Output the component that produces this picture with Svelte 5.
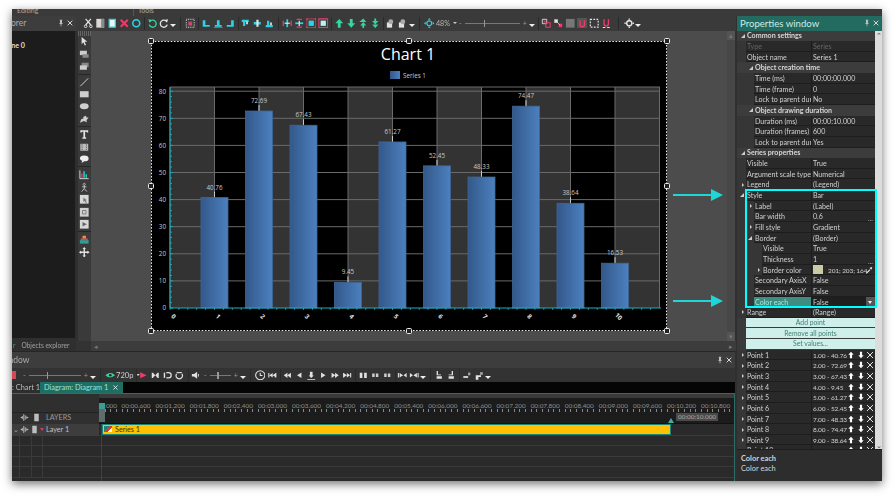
<script>
    const W = '#e2e2e2', C = '#2ad4e6', R = '#ee3a6a', G = '#35d6a0', B = '#9a9a9a';

    // small toolbar glyphs, all on a 12x12 box
    const icons = {
        cut: [{ d: 'M3 1l6 7M9 1L3 8', s: W, w: 1.4 }, { d: 'M1.5 9.5a1.5 1.5 0 1 0 3 0a1.5 1.5 0 1 0-3 0M7.5 9.5a1.5 1.5 0 1 0 3 0a1.5 1.5 0 1 0-3 0', s: W, w: 1.1 }],
        page: [{ d: 'M1.5 1h9v10h-9z', f: '#d8d8d8' }, { d: 'M7 1h3.5v10H7z', f: '#8a8a8a' }],
        bluepage: [{ d: 'M2.5 1.5h7v9h-7z', f: '#e8f8fa', s: C, w: 1.4 }],
        del: [{ d: 'M2 2l8 8M10 2l-8 8', s: R, w: 2.4 }],
        ring: [{ d: 'M2 6a4 4 0 1 0 8 0a4 4 0 1 0-8 0', s: C, w: 1.8 }],
        undo: [{ d: 'M3.2 4.2a4 4 0 1 1-.6 3.4', s: G, w: 1.5 }, { d: 'M1.5 1.5l4.2.8-2.8 3z', f: G }],
        redo: [{ d: 'M8.8 4.2a4 4 0 1 0 .6 3.4', s: W, w: 1.5 }, { d: 'M10.5 1.5l-4.2.8 2.8 3z', f: W }],
        grid: [{ d: 'M1.5 1.5h9v9h-9z', s: W, w: 1.2, dash: '1 1' }, { d: 'M3.5 3.5h5v5h-5z', f: '#555' }, { d: 'M4 5h4v3.5H4z', f: R }],
        al1: [{ d: 'M2 2.5h3v6H2zM2 8h8v2H2z', f: C }],
        al2: [{ d: 'M4.5 2.5h3v6h-3zM2 8h8v2H2z', f: C }, { d: 'M1 11h10', s: '#888', w: 1 }],
        al3: [{ d: 'M7 2.5h3v6H7zM2 8h8v2H2z', f: C }],
        at1: [{ d: 'M2 2h8v2.5H2zM3.5 4h2.5v5H3.5z', f: C }, { d: 'M7 4h2v3H7z', f: W }],
        at2: [{ d: 'M2 4.5h8v3H2z', f: C }, { d: 'M5 2h2.5v8H5z', f: W }],
        at3: [{ d: 'M2 8h8v2.5H2zM3.5 3h2.5v5H3.5z', f: C }, { d: 'M7 5h2v3H7z', f: W }],
        fit1: [{ d: 'M5 1.5h2v9H5z', f: C }, { d: 'M1.5 3v6M10.5 3v6', s: R, w: 1.5 }, { d: 'M3 6h6', s: W, w: 1.4 }],
        fit2: [{ d: 'M1.5 5h9v2h-9z', f: C }, { d: 'M3 1.5h6M3 10.5h6', s: R, w: 1.5 }, { d: 'M6 3v6', s: W, w: 1.4 }],
        fit3: [{ d: 'M3 3h6v6H3z', f: C }, { d: 'M1 2V1h1M10 1h1v1M1 10v1h1M10 11h1v-1', s: R, w: 1.4 }, { d: 'M1 1h10v10H1z', s: R, w: .8 }],
        fit4: [{ d: 'M3 3h6v6H3z', f: '#b8f2f6' }, { d: 'M1 1h10v10H1z', s: R, w: 1.2 }],
        up: [{ d: 'M6 1l4.5 5H7.6v5H4.4V6H1.5z', f: G }],
        down: [{ d: 'M6 11L1.5 6h2.9V1h3.2v5h2.9z', f: G }],
        up2: [{ d: 'M6 .5l3.5 4H1.5zM6 4.5l3.5 4H7v3H5v-3H2.5z', f: G }],
        down2: [{ d: 'M6 11.5l-3.5-4h7zM6 7.5l-3.5-4H5v-3h2v3h2.5z', f: G }],
        front: [{ d: 'M1 5h6v6H1z', f: W }, { d: 'M5.5 1.5a2.8 2.8 0 1 1 0 5.6a2.8 2.8 0 1 1 0-5.6z', f: '#aaa' }],
        target: [{ d: 'M6 3.2a2.8 2.8 0 1 0 .01 0', s: C, w: 1.5 }, { d: 'M6 0l1.6 2H4.4zM6 12l-1.6-2h3.2zM0 6l2-1.6v3.2zM12 6l-2 1.6V4.4z', f: C }],
        snap1: [{ d: 'M1.5 1.5h5v5h-5z', s: W, w: 1 }, { d: 'M5.5 5.5h5v5h-5z', s: R, w: 1.2 }, { d: 'M3 3h2v2H3z', f: R }],
        snap2: [{ d: 'M1.5 1.5h4v4h-4z', f: W }, { d: 'M6.5 6.5h4v4h-4z', f: R }, { d: 'M4 4l4 4', s: W, w: .8 }],
        square: [{ d: 'M1 1h10v10H1z', f: '#777' }],
        u1: [{ d: 'M0 0h12v12H0z', f: '#555' }, { d: 'M3.5 2.5v5a2.5 2.5 0 0 0 5 0v-5', s: R, w: 1.5 }],
        dots: [{ d: 'M1.5 1.5h9v9h-9z', s: W, w: 1.4, dash: '2 1.5' }],
        u2: [{ d: 'M3.5 1.5v5a2.5 2.5 0 0 0 5 0v-5', s: R, w: 1.6 }, { d: 'M2 11h3M7 11h3', s: W, w: 1.2 }],
        gear: [{ d: 'M6 3a3 3 0 1 0 .01 0', s: W, w: 1.8 }, { d: 'M5.2 .5h1.6V2H5.2zM5.2 10h1.6v1.5H5.2zM.5 5.2H2v1.6H.5zM10 5.2h1.5v1.6H10z', f: W }],
        arrow: [{ d: 'M3 1l6.5 5.6H6.4l1.6 3.6-1.5.7L5 7.2 3 9.4z', f: W }],
        box1: [{ d: 'M1 2h8v5H1z', f: '#ccc' }, { d: 'M4 6h7v4H4z', f: '#888' }],
        box2: [{ d: 'M3 2h8v5H3z', f: '#888' }, { d: 'M1 5h8v5H1z', f: '#ccc' }],
        line: [{ d: 'M1.5 10.5l9-9', s: W, w: 1 }],
        rect: [{ d: 'M1 2.5h10v7H1z', f: '#cfcfcf' }],
        oval: [{ d: 'M1 6a5 3.4 0 1 0 10 0a5 3.4 0 1 0-10 0', f: '#cfcfcf' }],
        star: [{ d: 'M1 10l1.5-4L5 5V3l3-1 .5 2H11L8.5 7 9 9.5 5.5 8z', f: '#cfcfcf' }],
        film: [{ d: 'M1.5 2h9v8h-9z', f: '#bbb' }, { d: 'M3.5 2v8M8.5 2v8', s: '#444', w: 1, dash: '1 1' }],
        bubble: [{ d: 'M1 5a5 3.4 0 1 1 5 3.4l-3 2 .6-2.6A3.4 3.4 0 0 1 1 5z', f: '#eee' }],
        chart: [{ d: 'M1 1.5v9.5h10', s: W, w: 1 }, { d: 'M2.5 10V5h1.6v5z', f: R }, { d: 'M5 10V2.5h1.6V10z', f: C }, { d: 'M7.5 10V6h1.6v4z', f: G }],
        person: [{ d: 'M6 1.5a1.2 1.2 0 1 0 .01 0M6 4v3.5L3 11M6 7.5L9 11M3.5 5.5h5', s: '#ccc', w: 1 }],
        sq1: [{ d: 'M1 1h10v10H1z', f: '#d8d8d8' }, { d: 'M5 4l4 3-1.5.5L9 10l-1 .5L6.5 8 5 9z', f: '#777' }],
        sq2: [{ d: 'M1 1h10v10H1z', f: '#d0d0d0' }, { d: 'M4 4h4v4H4z', s: '#777', w: 1 }],
        sq3: [{ d: 'M1 1h10v10H1z', f: '#d8d8d8' }, { d: 'M4 3.5l5 2.5-5 2.5z', f: '#666' }],
        bars: [{ d: 'M1 7h10v4H1z', f: '#2f9f96' }, { d: 'M2 5h8v2H2z', f: R }, { d: 'M4 2h4v3H4z', f: '#e09a30' }],
        move: [{ d: 'M6 0l2 2.4H6.8v2.8h2.8V4L12 6 9.6 8V6.8H6.8v2.8H8L6 12 4 9.6h1.2V6.8H2.4V8L0 6l2.4-2v1.2h2.8V2.4H4z', f: W }],
        text: [{ d: 'M1.5 1.5h9v2.4H9L8.6 3H7v6.5l1.2.3V11H3.8V9.8L5 9.5V3H3.4L3 3.9H1.5z', f: W }],
        eye: [{ d: 'M.5 6Q6 1 11.5 6Q6 11 .5 6z', f: G }, { d: 'M4.5 6a1.5 1.5 0 1 0 3 0a1.5 1.5 0 1 0-3 0', f: '#222' }],
        play: [{ d: 'M2.5 2.5L10 6l-7.5 3.5z', f: R }],
        cutin: [{ d: 'M2 3h1.6v6H2zM8.4 3H10v6H8.4zM3.6 3.5L6 6 3.6 8.5zM8.4 3.5L6 6l2.4 2.5z', f: W }],
        mark: [{ d: 'M2 3h1.6v6H2z', f: W }, { d: 'M5 3h2.5a3 3 0 0 1 0 6H5', s: W, w: 1.4 }],
        loop: [{ d: 'M3 4.5a3.6 3.6 0 1 0 6 0', s: W, w: 1.3 }, { d: 'M3 3h6', s: W, w: 1.3 }],
        speaker: [{ d: 'M1 4.5h2.5L7 2v8L3.5 7.5H1z', f: W }, { d: 'M8.5 4.5v3', s: W, w: 1 }],
        clock: [{ d: 'M6 .8a5.2 5.2 0 1 0 .01 0M6 3v3.2h2.6', s: W, w: 1.2 }],
        first: [{ d: 'M1.5 3.5h1.2v5H1.5zM2.7 6L6.5 3.5v5zM6.5 6l3.8-2.5v5z', f: W }, { d: 'M9.5 3.5h1.2v5H9.5z', f: W }],
        prev: [{ d: 'M2 6l4.2-3v6zM6 6l4.2-3v6z', f: W }],
        back: [{ d: 'M3.5 6l5-3.2v6.4z', f: W }],
        stop: [{ d: 'M4.5 2h3v4.4h1.4L6 9 3.1 6.4h1.4zM1.5 10.2h9v1h-9z', f: W }],
        fwd: [{ d: 'M8.5 6l-5-3.2v6.4z', f: W }],
        next: [{ d: 'M10 6L5.8 3v6zM6 6L1.8 3v6z', f: W }],
        last: [{ d: 'M10.5 3.5H9.3v5h1.2zM9.3 6L5.5 3.5v5zM5.5 6L1.7 3.5v5z', f: W }, { d: 'M1.3 3.5h1.2v5H1.3z', f: W }],
        pause: [{ d: 'M2 3h3v6H2zM7 3h3v6H7z', f: W }],
        pause2: [{ d: 'M2.5 4h2.8v4H2.5zM6.7 4h2.8v4H6.7z', f: '#cfcfcf' }],
        tr1: [{ d: 'M1 3.5h1.2v5H1zM3 3.5L7 6 3 8.5zM7.5 6l3.5-2.5v5z', f: W }],
        tr2: [{ d: 'M11 3.5H9.8v5H11zM9 3.5L5 6l4 2.5zM4.5 6L1 3.5v5z', f: W }],
        lay1: [{ d: 'M3 1h1.5v4H8v1H3zM3 7h6v3H3z', f: W }],
        lay2: [{ d: 'M8 1H6.5v4H3v1h5zM3 7h6v3H3z', f: W }],
        key1: [{ d: 'M1.5 7h5.5v2H1.5z', f: W }, { d: 'M7 3h2.5v3H7z', f: '#aaa' }],
        key2: [{ d: 'M2 6h6v2H5v3H2z', f: W }, { d: 'M7 2.5h3v3H7z', f: '#aaa' }],
        wave: [{ d: 'M1 6h2M3 4v4M5 1.5v9M7 3v6M9 4.5v3M11 6h-2', s: '#cfcfcf', w: 1.1 }],
        barV: [{ d: 'M3 1h6v10H3z', f: '#bdbdbd' }],
        pin: [{ d: 'M4 1h4v1l-.5.3V6L9 7.5H6.6V11h-1.2V7.5H3L4.5 6V2.3L4 2z', f: '#bdbdbd' }],
        close: [{ d: 'M2.5 2.5l7 7M9.5 2.5l-7 7', s: '#d6d6d6', w: 1.5 }],
        ptUp: [{ d: 'M6 1l4 4.8H7.6V11H4.4V5.8H2z', f: '#fff' }],
        ptDown: [{ d: 'M6 11L2 6.2h2.4V1h3.2v5.2H10z', f: '#fff' }],
        ptDel: [{ d: 'M1.5 1.5l9 9M10.5 1.5l-9 9', s: '#fff', w: 1.3 }],
        pipette: [{ d: 'M1.5 10.5L7 5l1 1-5.5 5.5zM7 3l1-1 .8.8L10 1.6l1 1L9.8 3.8l.6.6-1 1z', f: '#fff' }]
    };

    const s = (n) => ({ sep: n });
    const topTools = [
        'cut', 'page', 'bluepage', 'del', 'ring', s(4), 'undo', 'redo', 'drop', s(8), 'grid', s(4), 'al1', 'al2', 'al3', s(3), 'at1', 'at2', 'at3', s(6),
        'fit1', 'fit2', 'fit3', 'fit4', s(4), 'up', 'down', 'up2', 'down2', s(4), 'front', 'front', 'drop', s(8), 'target',
        { label: '48%', width: 22, tri: true }, { slider: 72 }, 'drop', s(5), 'snap1', 'snap2', 'square', 'u1', 'dots', 'u2', s(11), 'gear', 'drop'
    ];
    const leftTools = ['arrow', 'box1', 'box2', s(3), 'line', 'rect', 'oval', 'star', s(3), 'text', 'film', 'bubble', s(3), 'chart', 'person', 'sq1', 'sq2', 'sq3', s(3), 'bars', 'move'];
    const timeTools = [
        { slider: 69 }, 'drop', s(8), 'eye', { label: '720p', width: 18, tri: true, start: true }, s(3), 'play', 'cutin', 'mark', 'loop', s(5), 'speaker', { slider: 38 }, 'drop', s(8), 'clock',
        'first', s(3), 'prev', 'back', 'stop', 'fwd', 'next', 'last', s(4), 'pause', 'pause2', 'pause2', s(3), 'tr1', 'tr2', 'drop', s(7), 'lay1', 'lay2', s(4), 'key1', 'key2', 'drop'
    ];

    const props = [
        { kind: 'group', name: 'Common settings', open: true },
        { name: 'Type', value: 'Series', dim: true },
        { name: 'Object name', value: 'Series 1' },
        { kind: 'group', name: 'Object creation time', level: 1, open: true },
        { name: 'Time (ms)', value: '00:00:00.000', level: 1 },
        { name: 'Time (frame)', value: '0', level: 1 },
        { name: 'Lock to parent dur', value: 'No', level: 1 },
        { kind: 'group', name: 'Object drawing duration', level: 1, open: true },
        { name: 'Duration (ms)', value: '00:00:10.000', level: 1 },
        { name: 'Duration (frames)', value: '600', level: 1 },
        { name: 'Lock to parent dur', value: 'Yes', level: 1 },
        { kind: 'group', name: 'Series properties', open: true },
        { name: 'Visible', value: 'True' },
        { name: 'Argument scale type', value: 'Numerical' },
        { name: 'Legend', value: '(Legend)', closed: true },
        { name: 'Style', value: 'Bar', opened: true },
        { name: 'Label', value: '(Label)', level: 1, closed: true },
        { name: 'Bar width', value: '0.6', level: 1, more: true },
        { name: 'Fill style', value: 'Gradient', level: 1, closed: true },
        { name: 'Border', value: '(Border)', level: 1, opened: true },
        { name: 'Visible', value: 'True', level: 2 },
        { name: 'Thickness', value: '1', level: 2, more: true },
        { name: 'Border color', value: '201; 203; 164', level: 2, closed: true, swatch: true },
        { name: 'Secondary AxisX', value: 'False', level: 1 },
        { name: 'Secondary AxisY', value: 'False', level: 1 },
        { name: 'Color each', value: 'False', level: 1, selected: true },
        { name: 'Range', value: '(Range)', closed: true }
    ];
    const buttons = ['Add point', 'Remove all points', 'Set values...'];
    const values = [40.76, 72.69, 67.43, 9.45, 61.27, 52.45, 48.33, 74.47, 38.64, 16.53];
    const pointText = ['1.00 - 40.76', '2.00 - 72.69', '3.00 - 67.43', '4.00 - 9.45', '5.00 - 61.27', '6.00 - 52.45', '7.00 - 48.33', '8.00 - 74.47', '9.00 - 38.64', '10.00 - 16.53'];

    const stepX = 44.5, left = 170, base = 308, unit = 2.71;
    const cols = Array.from({ length: 12 }, (_, i) => i);
    const bands = [0, 2, 4, 6, 8, 10];
    const handles = [[151, 41], [409, 41], [667, 41], [151, 186], [667, 186], [151, 331], [409, 331], [667, 331]];
    const yTicks = Array.from({ length: 41 }, (_, i) => i * 2);
    const xTicks = Array.from({ length: 55 }, (_, i) => i);

    const rulerLabels = [];
    for (let i = 1; i <= 18; i++) {
        const t = i * 0.6;
        const sec = Math.floor(t + 0.001);
        const ms = Math.round((t - sec) * 1000);
        rulerLabels.push(`00:${String(sec).padStart(2, '0')}.${String(ms).padStart(3, '0')}`);
    }
    const emptyRows = [0, 1, 2, 3];
</script>

{#snippet glyph(name)}
    <svg class="glyph" viewBox="0 0 12 12" aria-hidden="true">
        {#each icons[name] as p}
            <path d={p.d} fill={p.f ?? 'none'} stroke={p.s ?? 'none'} stroke-width={p.w ?? 0} stroke-dasharray={p.dash} />
        {/each}
    </svg>
{/snippet}

{#snippet strip(items)}
    {#each items as item}
        {#if item === 'drop'}
            <span class="drop"></span>
        {:else if typeof item === 'string'}
            <span class="tool">{@render glyph(item)}</span>
        {:else if item.sep}
            <span class="sep" style="width: {item.sep}px"></span>
        {:else if item.label}
            <span class="tool-label" class:start={item.start} style="width: {item.width}px">{item.label}{#if item.tri}<i class="mini"></i>{/if}</span>
        {:else if item.slider}
            <span class="slider" style="width: {item.slider}px"><b>-</b><span class="track"><i></i></span><b>+</b></span>
        {/if}
    {/each}
{/snippet}

<div class="page">
    <div class="win">
        <div class="menu-cut">
            <span class="m1">Editing</span>
            <span class="m2">Tools</span>
        </div>

        <div class="columns">
            <div class="left-side">
                <div class="upper">
                    <aside class="explorer">
                        <div class="dock-head">
                            <span class="dock-title cut-ex">Explorer</span>
                            <span class="dock-icons">{@render glyph('pin')}{@render glyph('close')}</span>
                        </div>
                        <div class="explorer-body"><span class="scene">Scene 0</span></div>
                        <div class="explorer-tabs"><span class="tab-on">r</span><span>Objects explorer</span></div>
                    </aside>

                    <section class="work">
                        <div class="toolbar top">{@render strip(topTools)}</div>
                        <div class="work-mid">
                            <div class="toolcol">
                                <span class="grip"></span>
                                {#each leftTools as item}
                                    {#if item.sep}
                                        <span class="hsep"></span>
                                    {:else}
                                        <span class="vtool">{@render glyph(item)}</span>
                                    {/if}
                                {/each}
                            </div>
                            <div class="stage">
                                <svg class="chart" viewBox="151 41 516 290" width="516" height="290">
                                    <rect x="151" y="41" width="516" height="290" fill="#000" />
                                    <text x="408" y="60" class="title">Chart 1</text>
                                    <defs>
                                        <linearGradient id="barFill">
                                            <stop offset="0" stop-color="#33588a" />
                                            <stop offset="1" stop-color="#4c80bf" />
                                        </linearGradient>
                                    </defs>
                                    <rect x="390" y="71" width="10" height="8" fill="url(#barFill)" />
                                    <text x="403" y="78" class="tiny">Series 1</text>

                                    {#each bands as b}
                                        <rect x={left + b * stepX} y="87" width={stepX} height="221" fill="#333" />
                                    {/each}
                                    {#each cols as i}
                                        {#if left + i * stepX < 665}
                                            <line x1={left + i * stepX} x2={left + i * stepX} y1="87" y2="308" class="grid-line" />
                                        {/if}
                                    {/each}
                                    <line x1="170" x2="660" y1="87" y2="87" class="grid-line" />
                                    {#each [10, 20, 30, 40, 50, 60, 70, 80] as v}
                                        <line x1="170" x2="660" y1={base - v * unit} y2={base - v * unit} class="grid-line" />
                                    {/each}

                                    {#each values as v, i}
                                        {@const x = left + (i + 1) * stepX}
                                        {@const top = base - v * unit}
                                        <line x1={x} x2={x} y1={top - 6} y2={top} stroke="#c8c8c8" stroke-width="1" />
                                        <rect x={x - 13.5} y={top} width="27" height={v * unit} fill="url(#barFill)" stroke="#3f6797" stroke-width=".8" />
                                        <text x={x} y={top - 8} class="tiny mid">{v}</text>
                                    {/each}

                                    <line x1="170" x2="170" y1="87" y2="308" class="axis" />
                                    <line x1="170" x2="661" y1="308" y2="308" class="axis" />
                                    {#each yTicks as t}
                                        <line x1="170" x2={t % 10 === 0 ? 173 : 172} y1={base - t * unit} y2={base - t * unit} class="tick" />
                                    {/each}
                                    {#each xTicks as t}
                                        <line x1={left + t * 8.9} x2={left + t * 8.9} y1="308" y2="310" class="tick" />
                                    {/each}
                                    {#each [0, 10, 20, 30, 40, 50, 60, 70, 80] as v}
                                        <text x="166" y={base - v * unit + 2.4} class="tiny end">{v}</text>
                                    {/each}
                                    {#each Array.from({ length: 11 }, (_, i) => i) as i}
                                        <text x="0" y="0" class="tiny mid strong" transform="translate({left + i * stepX + 2} 318) rotate(45)">{i}</text>
                                    {/each}

                                    <rect x="151.5" y="41.5" width="515" height="289" class="sel" />
                                    {#each handles as [hx, hy]}
                                        <rect x={hx - 2.5} y={hy - 2.5} width="5" height="5" rx="1" fill="#222" stroke="#eee" stroke-width="1" />
                                    {/each}
                                </svg>
                            </div>
                            <div class="vscroll"><span class="scroll-btn">▴</span><span class="scroll-fill"></span><span class="scroll-btn">▾</span></div>
                        </div>
                        <div class="hscroll"><span class="corner"></span><span class="arrow-l">◂</span><span class="scroll-fill"></span><span class="arrow-r">▸</span></div>
                    </section>
                </div>

                <section class="timeline">
                    <div class="dock-head wide">
                        <span class="dock-title cut-tl">Timeline window</span>
                        <span class="dock-icons">{@render glyph('pin')}{@render glyph('close')}</span>
                    </div>
                    <div class="toolbar lower"><span class="stub"></span>{@render strip(timeTools)}</div>
                    <div class="tabs">
                        <span class="tab cut-tab">Scene 0: Chart 1</span>
                        <span class="tab active">Diagram: Diagram 1 <svg class="tab-x" viewBox="0 0 12 12"><path d="M2.5 2.5l7 7M9.5 2.5l-7 7" stroke="#e8e8e8" stroke-width="1.5" /></svg></span>
                    </div>
                    <div class="tracks">
                        <div class="row ruler">
                            <div class="head"></div>
                            <div class="scale">
                                <span class="zero">:000</span>
                                {#each rulerLabels as label}
                                    <span class="stamp">{label}</span>
                                {/each}
                            </div>
                        </div>
                        <div class="row layers">
                            <div class="head">
                                <span class="h-ic">{@render glyph('wave')}</span>
                                <span class="h-ic">{@render glyph('barV')}</span>
                                <span class="h-name">LAYERS</span>
                            </div>
                            <div class="under-scale"><span class="end-tip">00:00:10.000</span></div>
                        </div>
                        <div class="row layer">
                            <div class="head on">
                                <span class="chev">⌄</span>
                                <span class="h-ic">{@render glyph('wave')}</span>
                                <span class="h-ic">{@render glyph('barV')}</span>
                                <i class="red-tri"></i>
                                <span class="h-name">Layer 1</span>
                            </div>
                            <div class="lane"><div class="clip"><i class="clip-mark"></i>Series 1</div></div>
                        </div>
                        {#each emptyRows as r}
                            <div class="row plain" data-row={r}>
                                <div class="head cells"><i></i><i></i><i></i></div>
                                <div class="lane"></div>
                            </div>
                        {/each}
                        <span class="cursor-top"></span>
                        <span class="cursor-line"></span>
                        <span class="end-mark"></span>
                    </div>
                </section>
            </div>

            <aside class="props">
                <div class="props-head">
                    <span>Properties window</span>
                    <span class="dock-icons">{@render glyph('pin')}{@render glyph('close')}</span>
                </div>
                <div class="props-mid">
                    <div class="props-list">
                        {#each props as p}
                            {#if p.kind === 'group'}
                                <div class="prop group" style="padding-left: {(p.level ?? 0) * 8 + 4}px"><i class="tri-open"></i>{p.name}</div>
                            {:else}
                                <div class="prop" class:selected={p.selected} class:dim={p.dim} style="--lv: {(p.level ?? 0) * 8}px">
                                    <span class="gut">
                                        {#if p.closed}<i class="tri-closed"></i>{/if}
                                        {#if p.opened}<i class="tri-open"></i>{/if}
                                    </span>
                                    <span class="pname">{p.name}</span>
                                    <span class="pval">
                                        {#if p.swatch}<i class="swatch"></i>{/if}
                                        <span class:small={p.swatch}>{p.value}</span>
                                        {#if p.more}<i class="more">...</i>{/if}
                                        {#if p.swatch}<span class="pipette">{@render glyph('pipette')}</span>{/if}
                                        {#if p.selected}<i class="combo"></i>{/if}
                                    </span>
                                </div>
                            {/if}
                        {/each}
                        {#each buttons as b}
                            <button class="pbtn">{b}</button>
                        {/each}
                        {#each pointText as t, i}
                            <div class="prop point">
                                <span class="gut"><i class="tri-closed"></i></span>
                                <span class="pname">Point {i + 1}</span>
                                <span class="pval"><span class="small">{t}</span>
                                    <span class="pt-icons">{@render glyph('ptUp')}{@render glyph('ptDown')}{@render glyph('ptDel')}</span>
                                </span>
                            </div>
                        {/each}
                    </div>
                    <div class="props-scroll"><span>⌃</span><span>⌄</span></div>
                    <div class="highlight"></div>
                </div>
                <div class="props-desc">
                    <strong>Color each</strong>
                    <span>Color each</span>
                </div>
            </aside>
        </div>

        <svg class="pointer a1" viewBox="0 0 50 12" width="50" height="12"><path d="M0 5h38V0l12 6-12 6V7H0z" fill="#1fd6d6" /></svg>
        <svg class="pointer a2" viewBox="0 0 50 12" width="50" height="12"><path d="M0 5h38V0l12 6-12 6V7H0z" fill="#1fd6d6" /></svg>
    </div>
</div>

<style>
    :global(body) { margin: 0; background: #fff; font-family: Lato, "Liberation Sans", sans-serif; color: #d4d4d4; }

    .page { width: 894px; height: 496px; padding: 9px 12px 15px; box-sizing: border-box; overflow: hidden; }
    .win { position: relative; width: 870px; height: 472px; background: #2f2f2f; display: flex; flex-direction: column; box-shadow: 0 3px 9px rgb(0 0 0 / 0.55); filter: blur(0.3px); font-size: 7.2px; }

    .menu-cut { height: 6.5px; background: #3a3a3a; overflow: hidden; display: flex; line-height: 2px; color: #aaa; font-size: 7px; flex: none; }
    .m1 { margin-left: 5px; width: 116px; border-right: 1px solid #555; }
    .m2 { margin-left: 4px; }

    .columns { flex: 1; display: flex; min-height: 0; }
    .left-side { width: 724px; display: flex; flex-direction: column; flex: none; }
    .upper { height: 335.5px; display: flex; flex: none; }

    .explorer { width: 64px; flex: none; display: flex; flex-direction: column; background: #2f2f2f; }
    .dock-head { height: 15px; background: #3d3d3d; display: flex; align-items: center; justify-content: space-between; overflow: hidden; flex: none; }
    .dock-title { font-size: 8.5px; color: #aaa; white-space: nowrap; }
    .cut-ex { margin-left: -17px; }
    .dock-icons { display: flex; align-items: center; gap: 1px; margin-right: 2px; }
    .dock-icons .glyph { width: 8px; height: 8px; }
    .explorer-body { flex: 1; background: #1c1c1c; padding: 10px 0 0 0; overflow: hidden; margin-right: 1px; }
    .scene { margin-left: -12px; white-space: nowrap; display: block; color: #ddd; font-weight: 700; }
    .explorer-tabs { height: 13px; display: flex; align-items: center; gap: 6px; flex: none; color: #a0a0a0; font-size: 6.6px; padding-left: 1px; }
    .tab-on { color: #37a093; }

    .work { flex: 1; display: flex; flex-direction: column; min-width: 0; }
    .toolbar { display: flex; align-items: center; flex: none; }
    .top { height: 15px; background: #3a3a3a; padding-left: 6px; }
    .tool { width: 12px; height: 12px; display: flex; align-items: center; justify-content: center; flex: none; }
    .glyph { width: 10.5px; height: 10.5px; display: block; flex: none; }
    .drop { width: 6px; height: 8px; position: relative; flex: none; }
    .drop::after { content: ''; position: absolute; left: 0; bottom: 0; border: 3px solid transparent; border-top: 3px solid #eee; border-bottom: 0; }
    .sep { height: 13px; position: relative; flex: none; }
    .sep::after { content: ''; position: absolute; left: 50%; top: 0; bottom: 0; width: 1px; background: #2a2a2a; }
    .tool-label { display: flex; align-items: center; justify-content: flex-end; gap: 2px; color: #b5b5b5; flex: none; }
    .tool-label.start { justify-content: flex-start; color: #cfcfcf; font-size: 7.6px; }
    .mini { border: 2px solid transparent; border-top: 2.5px solid #ccc; border-bottom: 0; margin-left: 1px; }
    .slider { display: flex; align-items: center; gap: 3px; padding: 0 2px; box-sizing: border-box; color: #999; flex: none; }
    .slider b { font-weight: 400; }
    .track { flex: 1; height: 1px; background: #777; position: relative; }
    .track i { position: absolute; left: 35%; top: -3px; width: 1.5px; height: 7px; background: #999; }

    .work-mid { flex: 1; display: flex; min-height: 0; }
    .toolcol { width: 13px; margin-left: 2px; background: #3a3a3a; display: flex; flex-direction: column; align-items: center; flex: none; }
    .grip { height: 5px; width: 100%; background: repeating-linear-gradient(90deg, #666 0 1px, #3a3a3a 1px 2px); flex: none; }
    .vtool { width: 12px; height: 12.4px; display: flex; align-items: center; justify-content: center; flex: none; }
    .hsep { height: 3px; width: 100%; flex: none; position: relative; }
    .hsep::after { content: ''; position: absolute; left: 0; right: 0; top: 1px; height: 1px; background: #262626; }

    .stage { flex: 1; background: #4c4c4c; padding: 10px 0 0 60px; box-sizing: border-box; overflow: hidden; }
    .chart { display: block; overflow: visible; font-family: "Open Sans", Lato, sans-serif; }
    .title { font-size: 16px; fill: #fff; text-anchor: middle; }
    .tiny { font-size: 6.3px; fill: #c9c9c9; }
    .strong { fill: #e4e4e4; font-weight: 700; }
    .mid { text-anchor: middle; }
    .end { text-anchor: end; }
    .grid-line { stroke: #6a6a6a; stroke-width: 1; }
    .axis { stroke: #18b4bf; stroke-width: 1; }
    .tick { stroke: #18b4bf; stroke-width: .8; }
    .sel { fill: none; stroke: #ececec; stroke-width: 1; stroke-dasharray: 1.6 1.6; }

    .vscroll { width: 8px; background: #474747; display: flex; flex-direction: column; color: #777; flex: none; margin-right: 1px; }
    .scroll-btn { height: 9px; background: #545454; font-size: 7px; line-height: 9px; text-align: center; flex: none; }
    .scroll-fill { flex: 1; }
    .hscroll { height: 10px; display: flex; align-items: center; background: #3c3c3c; color: #777; flex: none; font-size: 7px; }
    .corner { width: 15px; flex: none; background: #333; height: 100%; }
    .arrow-l { padding-left: 3px; }
    .arrow-r { padding-right: 3px; }

    .timeline { flex: 1; display: flex; flex-direction: column; min-height: 0; margin-right: 1px; }
    .wide { height: 17px; border-top: 1.5px solid #262626; box-sizing: border-box; }
    .cut-tl { margin-left: -46px; }
    .lower { height: 14px; background: #333; }
    .stub { width: 9px; height: 8px; flex: none; background: linear-gradient(90deg, #d04a5a 0 4px, transparent 4px); }
    .tabs { height: 12px; background: #050505; display: flex; flex: none; border-bottom: 1px solid #2d6f66; box-sizing: border-box; align-items: stretch; overflow: hidden; }
    .tab { display: flex; align-items: center; gap: 4px; padding: 0 4px; white-space: nowrap; color: #bbb; font-size: 7.4px; }
    .cut-tab { margin-left: -32px; justify-content: flex-end; flex: none; background: #2e2e2e; padding-left: 36px; box-sizing: content-box; padding-right: 0; width: 24px; overflow: hidden; }
    .active { background: #1f6e63; color: #9fe0d6; }
    .tab-x { width: 7px; height: 7px; }

    .tracks { flex: 1; position: relative; display: flex; flex-direction: column; overflow: hidden; border-right: 1px solid #2d6f66; background: #2a2a2a; min-height: 0; }
    .row { display: flex; flex: none; }
    .head { width: 87px; flex: none; display: flex; align-items: center; background: #2f2f2f; box-sizing: border-box; }
    .ruler { height: 18px; }
    .scale { flex: 1; display: flex; align-items: flex-end; overflow: hidden; background: linear-gradient(#3a3a3a 0 4px, #1c1c1c 4px); position: relative; padding-bottom: 3px; box-sizing: border-box; color: #8f8f8f; font-size: 6.4px; white-space: nowrap; }
    .scale::after { content: ''; position: absolute; left: 0; right: 0; bottom: 0; height: 3px; background: repeating-linear-gradient(90deg, #888 0 1px, transparent 1px 5.68px); }
    .zero { width: 20px; flex: none; text-align: right; padding-right: 2px; box-sizing: border-box; }
    .stamp { width: 34.1px; flex: none; text-align: center; }
    .layers { height: 12px; }
    .layers .head { padding: 0 0 2px 7px; gap: 2px; background: #303030; border-top: 1px solid #222; }
    .h-ic { width: 10px; display: flex; justify-content: center; }
    .h-ic .glyph { width: 9px; height: 9px; }
    .h-name { margin-left: 3px; color: #9a9a9a; font-size: 7.2px; }
    .under-scale { flex: 1; background: #1c1c1c; position: relative; border-bottom: 1px solid #111; }
    .end-tip { position: absolute; left: 577px; top: 1px; background: #4a4a4a; color: #a8a8a8; padding: 0 2px; font-size: 6.4px; line-height: 8px; }
    .layer { height: 11.5px; }
    .on { background: #3d3d3d; padding-left: 1px; gap: 1px; }
    .on .h-ic { width: 9px; }
    .on .h-name { margin-left: 1px; color: #c0c0c0; }
    .red-tri { border: 2px solid transparent; border-top: 3px solid #d83a5a; border-bottom: 0; flex: none; }
    .chev { width: 6px; color: #aaa; line-height: 7px; }
    .lane { flex: 1; border-bottom: 1px solid #3a3a3a; position: relative; }
    .clip { position: absolute; left: 3px; width: 569px; top: 0; bottom: 0; background: #ffc000; border: 1px solid #1d8277; box-sizing: border-box; color: #3d3000; font-size: 7.2px; line-height: 9px; padding-left: 12px; }
    .clip-mark { position: absolute; left: 1px; top: 1px; width: 8px; height: 6px; background: linear-gradient(135deg, #1d8277 0 40%, #d6402e 40% 70%, #fff 70%); }
    .plain { height: 10.6px; }
    .cells { border-bottom: 1px solid #3a3a3a; background: #2a2a2a; position: relative; padding-left: 7px; gap: 10.5px; align-items: stretch; }
    .cells i { width: 1px; background: #3a3a3a; }
    .cursor-top { position: absolute; left: 87px; top: 9px; width: 6px; height: 19px; background: #5c6d6c; }
    .cursor-top::before { content: ''; position: absolute; left: 0; top: 0; width: 6px; height: 6px; background: #3d9c96; }
    .cursor-line { position: absolute; left: 89px; top: 30px; bottom: 0; width: 1px; background: #8d1f1f; }
    .end-mark { position: absolute; left: 656px; top: 24px; width: 0; height: 0; border: 3.5px solid transparent; border-bottom: 5px solid #4aa8a0; border-top: 0; }

    .props { flex: 1; margin-left: 1px; display: flex; flex-direction: column; min-width: 0; background: #3a3a3a; }
    .props-head { height: 15px; background: #236b60; display: flex; align-items: center; justify-content: space-between; padding-left: 3px; font-size: 9.6px; color: #c8ece6; flex: none; }
    .props-head .glyph { width: 8px; height: 8px; }
    .props-mid { flex: 1; display: flex; position: relative; min-height: 0; overflow: hidden; }
    .props-list { width: 138px; flex: none; overflow: hidden; }
    .prop { height: 10.65px; line-height: 11px; display: flex; box-sizing: border-box; white-space: nowrap; color: #cfcfcf; font-size: 7.1px; }
    .group { background: #3c3c3c; font-weight: 700; color: #d6d6d6; align-items: center; gap: 2px; }
    .gut { width: calc(9px + var(--lv, 0px)); flex: none; display: flex; justify-content: flex-end; align-items: center; padding-right: 2px; box-sizing: border-box; background: #363636; }
    .pname { width: calc(66px - var(--lv, 0px)); flex: none; background: #292929; border-bottom: 1px solid #1d1d1d; border-right: 1px solid #1d1d1d; box-sizing: border-box; padding-left: 1px; overflow: hidden; }
    .pval { flex: 1; background: #292929; border-bottom: 1px solid #1d1d1d; padding-left: 1px; position: relative; display: flex; align-items: flex-start; min-width: 0; overflow: hidden; }
    .small { font-size: 6.5px; letter-spacing: -0.1px; }
    .dim { color: #666; }
    .selected .pname { background: #3e8c82; color: #a7e6dd; }
    .selected .pval { background: #1f1f1f; }
    .tri-closed { border: 2px solid transparent; border-left: 2.5px solid #ccc; border-right: 0; }
    .tri-open { width: 0; height: 0; border-style: solid; border-width: 0 0 4px 4px; border-color: transparent transparent #ccc transparent; flex: none; }
    .swatch { width: 10px; height: 8.5px; background: #c9cba4; margin-right: 5px; margin-top: .5px; flex: none; }
    .pipette { position: absolute; right: 2px; top: 1px; }
    .pipette .glyph { width: 8px; height: 8px; }
    .more { position: absolute; right: 2px; top: 2px; font-style: normal; color: #aaa; }
    .combo { position: absolute; right: 0; top: 0; bottom: 0; width: 9px; background: #555; }
    .combo::after { content: ''; position: absolute; left: 2px; top: 4px; border: 2.5px solid transparent; border-top: 3px solid #eee; border-bottom: 0; }
    .pbtn { display: block; width: 129px; height: 9.65px; margin: 0 0 1px 9px; padding: 0; border: 0; background: #cff0ea; color: #3f7f76; font: 6.8px Lato, sans-serif; line-height: 9px; }
    .pt-icons { position: absolute; right: 1px; top: 1px; display: flex; gap: 1.5px; }
    .pt-icons .glyph { width: 8px; height: 8px; }
    .props-scroll { flex: 1; background: #dcdcdc; color: #444; display: flex; flex-direction: column; justify-content: space-between; align-items: center; font-size: 7px; line-height: 8px; }
    .highlight { position: absolute; left: 8px; top: 158px; width: 132px; height: 119px; border: 2.4px solid #0ff; box-sizing: border-box; }
    .props-desc { height: 32px; background: #2d2d2d; flex: none; display: flex; flex-direction: column; gap: 1px; padding: 4px 0 0 4px; box-sizing: border-box; font-size: 7.4px; color: #d6d6d6; border-top: 1px solid #1d1d1d; }

    .pointer { position: absolute; }
    .a1 { left: 661px; top: 180px; }
    .a2 { left: 661px; top: 286px; }
</style>
